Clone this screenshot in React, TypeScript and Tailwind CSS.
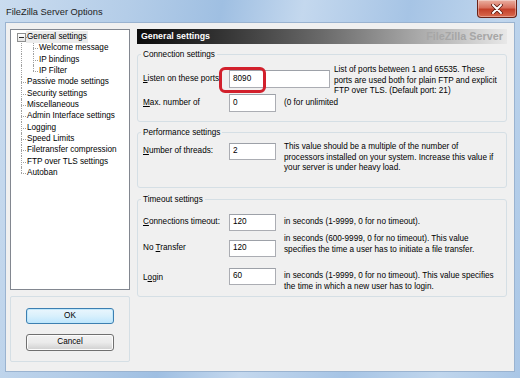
import type { ReactNode } from 'react';

// ─── Tree data ────────────────────────────────────────────────────────────────

type NodeKind = 'root' | 'child' | 'childLast' | 'top' | 'topLast';

const treeItems: { label: string; kind: NodeKind }[] = [
    { label: 'General settings', kind: 'root' },
    { label: 'Welcome message', kind: 'child' },
    { label: 'IP bindings', kind: 'child' },
    { label: 'IP Filter', kind: 'childLast' },
    { label: 'Passive mode settings', kind: 'top' },
    { label: 'Security settings', kind: 'top' },
    { label: 'Miscellaneous', kind: 'top' },
    { label: 'Admin Interface settings', kind: 'top' },
    { label: 'Logging', kind: 'top' },
    { label: 'Speed Limits', kind: 'top' },
    { label: 'Filetransfer compression', kind: 'top' },
    { label: 'FTP over TLS settings', kind: 'top' },
    { label: 'Autoban', kind: 'topLast' },
];

function TreeRow({ label, kind }: { label: string; kind: NodeKind }) {
    const isChild = kind === 'child' || kind === 'childLast';
    return (
        <div className="flex h-[11.33px] items-center">
            <span className="relative h-full w-[15px] shrink-0">
                {kind === 'root' ? (
                    <>
                        <span className="absolute left-[15px] top-1/2 w-[1px] border-t border-dotted border-[#a0a0a0]" />
                        <span className="absolute left-[6px] top-[1.5px] flex h-[9px] w-[9px] items-center justify-center border border-[#8e8f8f] bg-gradient-to-b from-white to-[#e4e4e4]">
                            <span className="h-px w-[5px] bg-[#2a2a2a]" />
                        </span>
                    </>
                ) : (
                    <>
                        <span
                            className={
                                kind === 'topLast'
                                    ? 'absolute left-[10px] top-0 h-1/2 border-l border-dotted border-[#a0a0a0]'
                                    : 'absolute left-[10px] top-0 bottom-0 border-l border-dotted border-[#a0a0a0]'
                            }
                        />
                        {!isChild && (
                            <span className="absolute left-[10px] top-1/2 w-[5px] border-t border-dotted border-[#a0a0a0]" />
                        )}
                    </>
                )}
            </span>
            {isChild && (
                <span className="relative h-full w-[12px] shrink-0">
                    <span
                        className={
                            kind === 'childLast'
                                ? 'absolute left-[7px] top-0 h-1/2 border-l border-dotted border-[#a0a0a0]'
                                : 'absolute left-[7px] top-0 bottom-0 border-l border-dotted border-[#a0a0a0]'
                        }
                    />
                    <span className="absolute left-[7px] top-1/2 w-[5px] border-t border-dotted border-[#a0a0a0]" />
                </span>
            )}
            <span className={kind === 'root' ? 'whitespace-nowrap bg-[#ececec] px-[1px]' : 'whitespace-nowrap pl-[1px]'}>
                {label}
            </span>
        </div>
    );
}

// ─── Form pieces ──────────────────────────────────────────────────────────────

function Field({ value, w = 'w-[47px]', h = 'h-[17px]' }: { value: string; w?: string; h?: string }) {
    return (
        <div className={`${w} ${h} flex shrink-0 items-center border border-[#abadb3] border-t-[#9da1a8] bg-white pl-[3px]`}>
            {value}
        </div>
    );
}

function Label({ children, h = 'h-[17px]' }: { children: ReactNode; h?: string }) {
    return <div className={`${h} flex w-[86px] shrink-0 items-center whitespace-nowrap`}>{children}</div>;
}

function Group({ title, className, children }: { title: string; className: string; children: ReactNode }) {
    return (
        <fieldset className={`rounded-[3px] border border-[#d5dfe5] px-[5px] ${className}`}>
            <legend className="-ml-[2px] px-[2px] leading-[11px]">{title}</legend>
            {children}
        </fieldset>
    );
}

function Lines({ lines, className }: { lines: string[]; className: string }) {
    return (
        <div className={`leading-[10.5px] ${className}`}>
            {lines.map((l) => (
                <div key={l} className="whitespace-nowrap">
                    {l}
                </div>
            ))}
        </div>
    );
}

function Button({ children, focused }: { children: ReactNode; focused?: boolean }) {
    return (
        <div
            className={
                focused
                    ? 'mx-auto flex h-[16px] w-[88px] items-center justify-center rounded-[3px] border border-[#3c7fb1] bg-gradient-to-b from-[#eaf6fd] via-[#d9f0fc] to-[#bee6fd] shadow-[inset_0_0_0_1px_#bfe7fb]'
                    : 'mx-auto flex h-[17px] w-[88px] items-center justify-center rounded-[3px] border border-[#707070] bg-gradient-to-b from-[#f2f2f2] via-[#ebebeb] to-[#cfcfcf] shadow-[inset_0_0_0_1px_#fcfcfc]'
            }
        >
            {children}
        </div>
    );
}

// ─── App ──────────────────────────────────────────────────────────────────────

export default function App() {
    return (
        <div className="flex h-[378px] w-[520px] flex-col overflow-hidden bg-[linear-gradient(100deg,#cadcef_0%,#b4cde8_22%,#9fbfe2_38%,#c4d8ee_52%,#a6c4e5_70%,#c0d6ed_86%,#a9c6e6_100%)] font-['Liberation_Sans',Arial,sans-serif] text-[8.2px] text-black">
            {/* Title bar */}
            <div className="flex h-[22px] shrink-0 items-start justify-between">
                <span className="pl-[6px] pt-[6px] text-[9.3px] leading-[12px] text-[#1e1e1e]">FileZilla Server Options</span>
                <div className="mr-[3px] flex h-[18px] w-[40px] items-center justify-center rounded-b-[4px] border border-t-0 border-[#6a2318] bg-[linear-gradient(#eab0a2,#d8705d_45%,#c3402a_55%,#d96a4f)] shadow-[inset_0_0_0_1px_rgba(255,255,255,0.35)]">
                    <svg width="12" height="10" viewBox="0 0 12 10">
                        <path d="M2 1 L10 9 M10 1 L2 9" stroke="#5a1a10" strokeWidth="3.6" strokeLinecap="round" />
                        <path d="M2 1 L10 9 M10 1 L2 9" stroke="#ffffff" strokeWidth="2" strokeLinecap="round" />
                    </svg>
                </div>
            </div>

            {/* Client area */}
            <div className="mx-[5px] flex h-[350px] shrink-0 gap-[7px] border border-[#9ab3d0] bg-[#f0f0f0] pl-[4px] pr-[7px] pt-[6px]">
                {/* Left column */}
                <div className="flex w-[120px] shrink-0 flex-col gap-[6px]">
                    <div className="h-[261px] border border-[#828790] bg-white pt-[1.5px]">
                        {treeItems.map((it) => (
                            <TreeRow key={it.label} label={it.label} kind={it.kind} />
                        ))}
                    </div>
                    <div className="flex h-[66px] flex-col gap-[10px] rounded-[2px] border border-[#d5dfe5] pt-[11px]">
                        <Button focused>OK</Button>
                        <Button>Cancel</Button>
                    </div>
                </div>

                {/* Right column */}
                <div className="flex w-[370px] shrink-0 flex-col">
                    <div className="flex h-[15px] items-center justify-between bg-gradient-to-r from-[#0c0c0c] via-[#6a6a6a] to-[#e8e8e8] px-[4px]">
                        <span className="text-[8.8px] font-bold text-white">General settings</span>
                        <span className="text-[10.8px] font-bold text-[#a6a6a6]">FileZilla Server</span>
                    </div>

                    <Group title="Connection settings" className="mt-[5px] pb-[9px]">
                        <div className="mt-[10px] flex items-start">
                            <Label h="h-[18px]">
                                <span>
                                    <u>L</u>isten on these ports
                                </span>
                            </Label>
                            <div className="relative">
                                <Field value="8090" w="w-[101px]" h="h-[18px]" />
                                <span className="absolute -left-[10px] -top-[3px] h-[26px] w-[47px] rounded-[6px] border-[3px] border-[#d2202c]" />
                            </div>
                            <Lines
                                className="-mb-[8.5px] -mt-[5px] ml-[4px]"
                                lines={[
                                    'List of ports between 1 and 65535. These',
                                    'ports are used both for plain FTP and explicit',
                                    'FTP over TLS. (Default port: 21)',
                                ]}
                            />
                        </div>
                        <div className="mt-[6px] flex items-center">
                            <Label h="h-[18px]">
                                <span>
                                    <u>M</u>ax. number of
                                </span>
                            </Label>
                            <Field value="0" h="h-[18px]" />
                            <span className="ml-[8px] whitespace-nowrap">(0 for unlimited</span>
                        </div>
                    </Group>

                    <Group title="Performance settings" className="mt-[5px] pb-[13px]">
                        <div className="mt-[5px] flex items-start">
                            <Label>
                                <span>
                                    <u>N</u>umber of threads:
                                </span>
                            </Label>
                            <Field value="2" />
                            <Lines
                                className="-mt-[1px] ml-[8px]"
                                lines={[
                                    'This value should be a multiple of the number of',
                                    'processors installed on your system. Increase this value if',
                                    'your server is under heavy load.',
                                ]}
                            />
                        </div>
                    </Group>

                    <Group title="Timeout settings" className="mt-[6px] pb-[4px]">
                        <div className="mt-[9.5px] flex items-center">
                            <Label>
                                <span>
                                    <u>C</u>onnections timeout:
                                </span>
                            </Label>
                            <Field value="120" />
                            <span className="ml-[8px] whitespace-nowrap">in seconds (1-9999, 0 for no timeout).</span>
                        </div>
                        <div className="mt-[9px] flex items-start">
                            <Label>
                                <span>
                                    No <u>T</u>ransfer
                                </span>
                            </Label>
                            <Field value="120" />
                            <Lines
                                className="-mt-[6px] ml-[8px]"
                                lines={[
                                    'in seconds (600-9999, 0 for no timeout). This value',
                                    'specifies the time a user has to initiate a file transfer.',
                                ]}
                            />
                        </div>
                        <div className="mt-[11px] flex items-start">
                            <Label>
                                <span className="pt-[3px]">
                                    L<u>o</u>gin
                                </span>
                            </Label>
                            <Field value="60" />
                            <Lines
                                className="ml-[8px] mt-[3px]"
                                lines={[
                                    'in seconds (1-9999, 0 for no timeout). This value specifies',
                                    'the time in which a new user has to login.',
                                ]}
                            />
                        </div>
                    </Group>
                </div>
            </div>
        </div>
    );
}
